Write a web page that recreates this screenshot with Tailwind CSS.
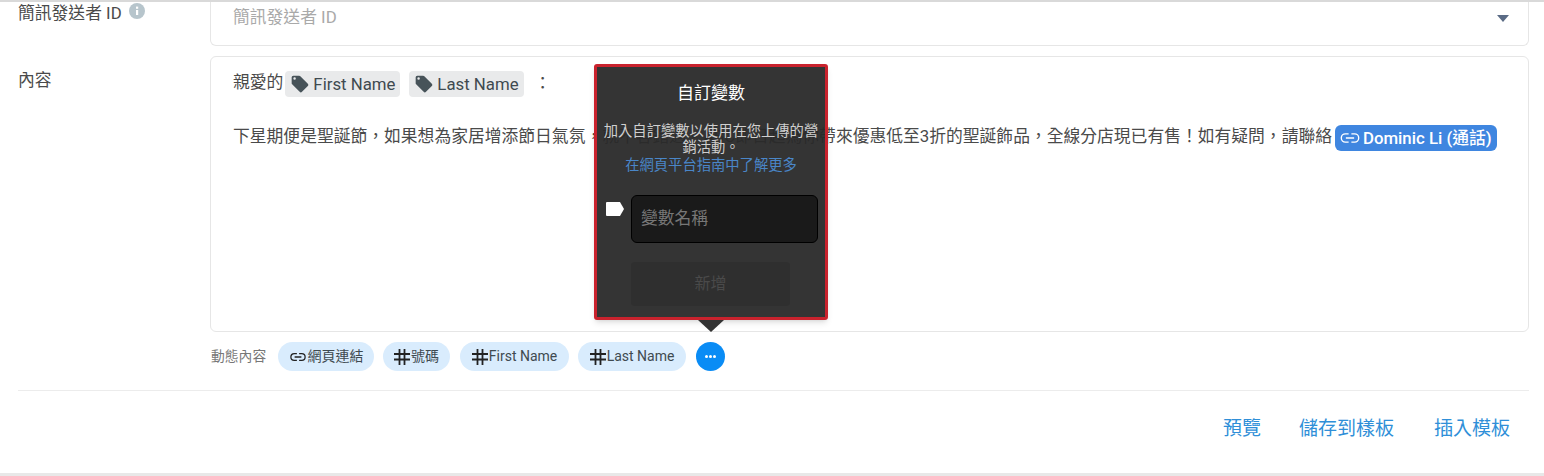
<!DOCTYPE html>
<html lang="zh-Hant"><head><meta charset="utf-8"><script src="https://cdn.jsdelivr.net/npm/@tailwindcss/browser@4"></script></head>
<body class="m-0 bg-[#e8e8e8] font-['Roboto','Noto_Sans_CJK_TC',sans-serif]">
<div class="relative w-[1544px] h-[476px] overflow-hidden">
<main class="h-[473px] bg-white border-t-2 border-[#d9d9d9] pl-[18px] pr-[15px] text-[#4a4a4a]">
  <section class="flex">
    <div class="w-[192px] flex items-start gap-[7px] text-[16.8px] leading-5 pt-[1px]">
      <span>簡訊發送者 ID</span>
      <svg class="w-[16px] h-[16px] mt-0" viewBox="0 0 16 16"><circle cx="8" cy="8" r="8" fill="#b7c5cc"/><rect x="7" y="7" width="2.2" height="5" fill="#fff"/><rect x="7" y="3.6" width="2.2" height="2.2" fill="#fff"/></svg>
    </div>
    <div class="flex-1 h-[44px] border border-t-0 border-[#e6e6e6] rounded-b-md pl-[22px] pr-[19px] flex justify-between text-[16.8px] text-[#a9a9a9]">
      <span class="pt-[5px] leading-5">簡訊發送者 ID</span>
      <svg class="w-3 h-2 mt-[13px]" viewBox="0 0 12 8"><path d="M0 0h12L6 7z" fill="#5a6b85"/></svg>
    </div>
  </section>
  <section class="flex mt-[10px]">
    <div class="w-[192px] text-[16.8px] leading-5 pt-[14px]">內容</div>
    <div class="flex-1 h-[276px] border border-[#e6e6e6] rounded-md pl-[22px] pr-[4px] pt-[14px] text-[16.8px] text-[#4a4a4a]">
      <div class="flex items-center h-[26px] leading-5">
        <span class="mb-[4px]">親愛的</span>
        <span class="ml-[2px] h-[26px] w-[115px] rounded bg-[#e9eaeb] flex items-center gap-[3px] pl-[5px] text-[#3f4a50]">
          <svg class="w-[20px] h-[20px] shrink-0" viewBox="0 0 24 24"><path fill="#475359" d="M21.4 11.6 12.4 2.6A2 2 0 0 0 11 2H4a2 2 0 0 0-2 2v7c0 .55.22 1.05.59 1.42l9 9a2 2 0 0 0 2.82 0l7-7a2 2 0 0 0-.01-2.82zM5.5 7A1.5 1.5 0 1 1 5.5 4a1.5 1.5 0 0 1 0 3z"/></svg>
          First Name</span>
        <span class="ml-[9px] h-[26px] w-[115px] rounded bg-[#e9eaeb] flex items-center gap-[3px] pl-[5px] text-[#3f4a50]">
          <svg class="w-[20px] h-[20px] shrink-0" viewBox="0 0 24 24"><path fill="#475359" d="M21.4 11.6 12.4 2.6A2 2 0 0 0 11 2H4a2 2 0 0 0-2 2v7c0 .55.22 1.05.59 1.42l9 9a2 2 0 0 0 2.82 0l7-7a2 2 0 0 0-.01-2.82zM5.5 7A1.5 1.5 0 1 1 5.5 4a1.5 1.5 0 0 1 0 3z"/></svg>
          Last Name</span>
        <span class="ml-[10px] mb-[3px]">&#65306;</span>
      </div>
      <div class="flex items-center h-[26px] mt-[28px] whitespace-nowrap leading-5">
        <span class="mb-[4px]">下星期便是聖誕節&#65292;如果想為家居增添節日氣氛&#65292;就不容錯過&#12290;ABC即日起為你帶來優惠低至3折的聖誕飾品&#65292;全線分店現已有售&#65281;如有疑問&#65292;請聯絡</span>
        <span class="ml-[3px] h-[26px] w-[162px] rounded-md bg-[#3f86e0] text-white flex items-center gap-[2px] pl-[4px] font-medium shrink-0">
          <svg class="w-[22px] h-[22px] shrink-0" viewBox="0 0 24 24"><path fill="none" stroke="#fff" stroke-width="1.5" d="M10.5 7.5H7a4.5 4.5 0 0 0 0 9h3.5M13.5 7.5H17a4.5 4.5 0 0 1 0 9h-3.500M7.500 12h9"/></svg>
          Dominic Li (通話)</span>
      </div>
    </div>
  </section>
  <section class="ml-[192px] mt-[10px] h-[29px] flex items-center text-[14px] text-[#3f4a50]">
    <span class="w-[68px] pl-[1px] text-[13.8px] text-[#777] whitespace-nowrap">動態內容</span>
    <span class="h-[29px] w-[96px] rounded-full bg-[#d9ecfd] flex items-center justify-center gap-[1px]">
      <svg class="w-[18px] h-[18px]" viewBox="0 0 24 24"><path fill="none" stroke="#222" stroke-width="1.7" d="M10.5 7.5H7a4.5 4.5 0 0 0 0 9h3.5M13.5 7.5H17a4.5 4.5 0 0 1 0 9h-3.500M7.500 12h9"/></svg>網頁連結</span>
    <span class="ml-[9px] h-[29px] w-[67px] rounded-full bg-[#d9ecfd] flex items-center justify-center gap-[1px]">
      <svg class="w-[16px] h-[16px]" viewBox="0 0 16 16"><path fill="none" stroke="#222" stroke-width="1.8" d="M5.5 0v16M10.5 0v16M0 5h16M0 10.5h16"/></svg>號碼</span>
    <span class="ml-[10px] h-[29px] w-[109px] rounded-full bg-[#d9ecfd] flex items-center justify-center gap-[1px]">
      <svg class="w-[16px] h-[16px]" viewBox="0 0 16 16"><path fill="none" stroke="#222" stroke-width="1.8" d="M5.5 0v16M10.5 0v16M0 5h16M0 10.5h16"/></svg>First Name</span>
    <span class="ml-[9px] h-[29px] w-[108px] rounded-full bg-[#d9ecfd] flex items-center justify-center gap-[1px]">
      <svg class="w-[16px] h-[16px]" viewBox="0 0 16 16"><path fill="none" stroke="#222" stroke-width="1.8" d="M5.5 0v16M10.5 0v16M0 5h16M0 10.5h16"/></svg>Last Name</span>
    <span class="ml-[10px] h-[29px] w-[29px] rounded-full bg-[#0a8cf5] flex items-center justify-center gap-[1px]">
      <i class="w-[3px] h-[3px] rounded-full bg-white"></i><i class="w-[3px] h-[3px] rounded-full bg-white"></i><i class="w-[3px] h-[3px] rounded-full bg-white"></i>
    </span>
  </section>
  <hr class="mt-[19px] border-0 border-t border-[#ececec]">
  <div class="mt-[26px] flex justify-end gap-[40px] pr-[19px] text-[19px] leading-6 text-[#2f8fd8]">
    <span class="-mr-[2px]">預覽</span><span>儲存到樣板</span><span>插入模板</span>
  </div>
</main>

<div class="absolute left-[594px] top-[64px] w-[234px] h-[256px] border-[3px] border-[#c9222d] rounded-[3px] bg-[#292929]/95 shadow-md text-center text-white">
  <div class="mt-[14px] text-[17px] leading-6">自訂變數</div>
  <p class="mt-[18px] px-[3px] text-[14.3px] leading-[16px] text-[#cfcfcf]">加入自訂變數以使用在您上傳的營銷活動&#12290;</p>
  <a class="block mt-[1px] text-[14.3px] leading-[18px] text-[#4a86c8]">在網頁平台指南中了解更多</a>
  <div class="mt-[21px] flex items-start">
    <svg class="ml-[8px] mt-[7px] w-[20px] h-[14px]" viewBox="0 0 20 14"><path fill="#fff" d="M2 0h13l4 7-4 7H2a1 1 0 0 1-1-1V1a1 1 0 0 1 1-1z"/></svg>
    <div class="ml-[6px] w-[187px] h-[48px] rounded-md bg-[#1a1a1a] border border-black text-left pl-[9px] text-[16.8px] leading-[44px] text-[#777]">變數名稱</div>
  </div>
  <div class="ml-[34px] mt-[19px] w-[159px] h-[44px] rounded bg-[#2f2f2f] text-[16px] leading-[44px] text-[#4a4a4a]">新增</div>
</div>
<div class="absolute left-[698px] top-[320px] w-0 h-0 border-x-[13px] border-x-transparent border-t-[12px] border-t-[#333]"></div>
</div>
</body></html>
